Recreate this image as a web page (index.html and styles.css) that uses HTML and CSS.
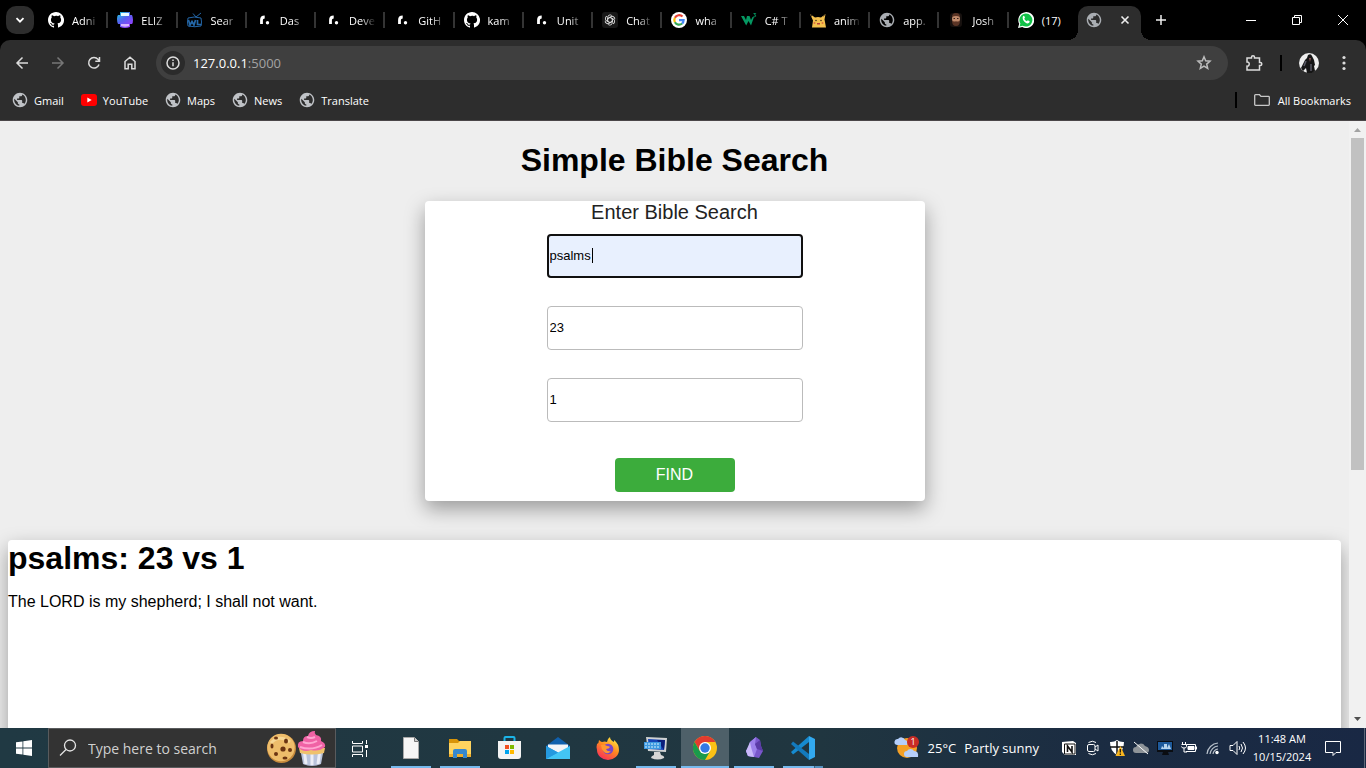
FILE: index.html
```html
<!DOCTYPE html>
<html lang="en">
<head>
<meta charset="utf-8">
<title>Simple Bible Search</title>
<link rel="stylesheet" href="styles.css">
</head>
<body>
<svg class="sprite" aria-hidden="true">
  <symbol id="globe" viewBox="1 1 22 22"><path fill="currentColor" d="M12 2C6.480 2 2 6.480 2 12s4.480 10 10 10 10-4.480 10-10S17.520 2 12 2zm-1 17.930c-3.950-.49-7-3.850-7-7.930 0-.62.08-1.210.21-1.790L9 15v1c0 1.100.9 2 2 2v1.930zm6.900-2.540c-.26-.81-1-1.390-1.900-1.390h-1v-3c0-.55-.45-1-1-1H8v-2h2c.55 0 1-.45 1-1V7h2c1.100 0 2-.9 2-2v-.41c2.930 1.190 5 4.060 5 7.410 0 2.080-.8 3.970-2.100 5.390z"/></symbol>
  <symbol id="github" viewBox="0 0 16 16"><path fill="#fff" d="M8 0C3.580 0 0 3.580 0 8c0 3.540 2.290 6.530 5.470 7.590.4.070.55-.17.55-.38v-1.490c-2.010.37-2.530-.49-2.690-.94-.09-.23-.48-.94-.82-1.130-.28-.15-.68-.52-.01-.53.63-.01 1.080.58 1.230.82.72 1.210 1.870.87 2.330.66.07-.52.28-.87.51-1.070-1.780-.2-3.640-.89-3.640-3.950 0-.87.31-1.590.82-2.150-.08-.2-.36-1.020.08-2.120 0 0 .67-.21 2.200.82A7.600 7.600 0 0 1 8 3.870c.68 0 1.360.09 2 .27 1.530-1.040 2.200-.82 2.200-.82.44 1.100.16 1.920.08 2.120.51.56.82 1.270.82 2.150 0 3.070-1.870 3.750-3.650 3.950.29.25.54.73.54 1.480v2.200c0 .21.15.46.55.38A8 8 0 0 0 8 0z"/></symbol>
  <symbol id="rdot" viewBox="0 0 16 16"><path d="M5.500 12V8Q5.500 5 8.700 5" fill="none" stroke="#fff" stroke-width="2.800"/><circle cx="11.500" cy="10.700" r="1.700" fill="#fff"/></symbol>
</svg>

<header class="browser">
  <div class="tabstrip">
    <button class="tab-search" aria-label="Search tabs"><svg viewBox="0 0 10 10" width="10" height="10"><path d="M1.500 3.200 5 6.700l3.500-3.500" fill="none" stroke="#fff" stroke-width="1.800"/></svg></button>
    <nav class="tabs" aria-label="Open tabs">
      <a class="tab" href="#"><svg class="fav"><use href="#github"/></svg><span>Adni</span></a>
      <a class="tab" href="#"><svg class="fav" viewBox="0 0 16 16"><defs><linearGradient id="el" x2=".7" y2="1"><stop stop-color="#18d4dc"/><stop offset=".5" stop-color="#5660f0"/><stop offset="1" stop-color="#9a3cff"/></linearGradient></defs><path d="M3 0h10v3h2q1 2 1 5t-1 4h-2v3q-5 2-10 0v-3H1Q0 10 0 7t1-4h2z" fill="url(#el)"/><path d="M4 1h8v3H4z" fill="#e8fbff"/><path d="M4 12h8v2q-4 1.500-8 0z" fill="#d8b5ff"/></svg><span>ELIZ</span></a>
      <a class="tab" href="#"><svg class="fav" viewBox="0 0 16 16" fill="none" stroke="#2467a8"><path d="m9 5 5-4M9 5 6 1.500"/><path d="M1 6q6-2 13 0 1 4 0 8-6 1.500-13 0-1-4 0-8z"/><path d="m1.500 8 1.500 5 2-3.500L7 13l1.500-5m2 0v4.500h4" stroke-width="1.700"/></svg><span>Sear</span></a>
      <a class="tab" href="#"><svg class="fav"><use href="#rdot"/></svg><span>Das</span></a>
      <a class="tab" href="#"><svg class="fav"><use href="#rdot"/></svg><span>Deve</span></a>
      <a class="tab" href="#"><svg class="fav"><use href="#rdot"/></svg><span>GitH</span></a>
      <a class="tab" href="#"><svg class="fav"><use href="#github"/></svg><span>kam</span></a>
      <a class="tab" href="#"><svg class="fav"><use href="#rdot"/></svg><span>Unit</span></a>
      <a class="tab" href="#"><svg class="fav" viewBox="0 0 16 16"><rect width="16" height="16" rx="3" fill="#181818"/><g fill="none" stroke="#ddd" stroke-width=".9"><g id="petal"><path d="M8 5.400 10.400 6.800v3.700a2.600 2.600 0 0 1-4.200 2"/></g><use href="#petal" transform="rotate(60 8 8)"/><use href="#petal" transform="rotate(120 8 8)"/><use href="#petal" transform="rotate(180 8 8)"/><use href="#petal" transform="rotate(240 8 8)"/><use href="#petal" transform="rotate(300 8 8)"/></g></svg><span>Chat</span></a>
      <a class="tab" href="#"><svg class="fav" viewBox="0 0 16 16"><circle cx="8" cy="8" r="8" fill="#fff"/><g fill="none" stroke-width="2.200"><path d="M11.500 4.600A4.700 4.700 0 0 0 3.900 5.800" stroke="#ea4335"/><path d="M3.900 5.800a4.700 4.700 0 0 0 0 4.500" stroke="#fbbc05"/><path d="M3.900 10.300a4.700 4.700 0 0 0 7.200 1.200" stroke="#34a853"/><path d="M11.100 11.500A4.500 4.500 0 0 0 12.600 8.200H8" stroke="#4285f4"/></g></svg><span>wha</span></a>
      <a class="tab" href="#"><svg class="fav" viewBox="0 0 16 16"><path d="M0 4h3l2 4 1-4h2.500l1.500 4 1.500-3h1.500L10 13.500 7.500 9l-2.300 4.500z" fill="#059862"/><path d="M12.500 1.500h2.200L13.500 3q1.500 0 1.200 1.200-.7 1-2.200.3" fill="none" stroke="#059862" stroke-width=".9"/></svg><span>C# T</span></a>
      <a class="tab" href="#"><svg class="fav" viewBox="0 0 16 16"><path d="m0 2 5 3.500q3-1 6 0L15.500 2l-1 5.500 1.500 8H2l1-7z" fill="#f4c14e"/><path d="m0 2 2 1v2zM15.500 2l-2 1v2z" fill="#352717"/><circle cx="6" cy="8.500" r=".8" fill="#43301b"/><circle cx="11" cy="8.500" r=".8" fill="#43301b"/><path d="M7 11h3v1.500H7z" fill="#b5403a"/><circle cx="4.500" cy="11" r="1" fill="#df7340"/><circle cx="12.500" cy="11" r="1" fill="#df7340"/></svg><span>anim</span></a>
      <a class="tab" href="#"><svg class="fav"><use href="#globe"/></svg><span>app.</span></a>
      <a class="tab" href="#"><svg class="fav" viewBox="0 0 16 16"><rect x="2" y="1" width="12" height="14" rx="3" fill="#17110f"/><ellipse cx="8" cy="7" rx="4" ry="5" fill="#c18b6c"/><path d="M4 5q0-4 4-4t4 4Q8 3 4 5M4 8.500q1 1.500 4 .8 3 .7 4-.8 0 5.500-4 5.500T4 8.500" fill="#5a3425"/><path d="M5.500 6.500h1.500m2 0h1.500" stroke="#35201a"/></svg><span>Josh</span></a>
      <a class="tab" href="#"><svg class="fav" viewBox="0 0 16 16"><path d="M0 16l1.200-4.200A8 8 0 1 1 4.300 15z" fill="#fff"/><path d="m1.600 14.400.8-2.800a6.500 6.500 0 1 1 2.200 2.100z" fill="#12c148"/><path d="M5 4.200q1-.8 1.500.3l.5 1.300-.8 1q.8 1.800 2.600 2.500l1-1.100 1.900 1q0 2-2 2.200C6.500 11 3.700 7 5 4.200" fill="#fff"/></svg><span>(17)</span></a>
    </nav>
    <div class="active-tab"><svg class="fav"><use href="#globe"/></svg><button aria-label="Close tab"><svg viewBox="0 0 10 10" width="10" height="10"><path d="m1.500 1.500 7 7m0-7-7 7" stroke="#eee" stroke-width="1.600"/></svg></button></div>
    <div class="window-area">
      <button aria-label="New tab"><svg viewBox="0 0 12 12" width="12" height="12"><path d="M6 1v10M1 6h10" stroke="#eee" stroke-width="1.500"/></svg></button>
      <div class="window-controls">
        <button aria-label="Minimize"><svg width="12" height="12"><path d="M1 6.500h10" stroke="#fff"/></svg></button>
        <button aria-label="Restore"><svg width="12" height="12" fill="none" stroke="#fff"><path d="M1.500 3.500h7v7h-7zM3.500 3.500v-2h7v7h-2"/></svg></button>
        <button aria-label="Close"><svg width="12" height="12"><path d="m1 1 10 10m0-10L1 11" stroke="#fff"/></svg></button>
      </div>
    </div>
  </div>

  <div class="toolbar">
    <div class="nav-buttons">
      <button aria-label="Back"><svg viewBox="0 0 16 16"><path d="M14 8H3m5.500-5.500L3 8l5.500 5.500"/></svg></button>
      <button class="dim" aria-label="Forward"><svg viewBox="0 0 16 16"><path d="M2 8h11M7.500 2.500 13 8l-5.500 5.500"/></svg></button>
      <button aria-label="Reload"><svg viewBox="0 0 16 16"><path d="M13 9.500A5.300 5.300 0 1 1 12 4.300l1.500 1.700M13.500 2v4.200H9.300"/></svg></button>
      <button aria-label="Home"><svg viewBox="0 0 16 16"><path d="M3 6.500 8 2.300l5 4.200v7.200H9.800V9.300H6.200v4.400H3z"/></svg></button>
    </div>
    <div class="omnibox">
      <button class="site-info" aria-label="Site information"><svg viewBox="0 0 16 16"><circle cx="8" cy="8" r="6"/><path d="M8 7.300v4M8 4.500v1.500"/></svg></button>
      <div class="address"><span>127.0.0.1</span>:5000</div>
      <button class="star" aria-label="Bookmark this page"><svg viewBox="0 0 16 16"><path d="m8 1.800 1.700 4 4.300.4-3.300 2.900 1 4.300L8 11.100l-3.700 2.300 1-4.300L2 6.200l4.300-.4z"/></svg></button>
    </div>
    <div class="toolbar-end">
      <button aria-label="Extensions"><svg class="ext" viewBox="0 0 18 18"><path d="M2 4h4.500V3.200a1.500 1.500 0 0 1 3 0V4h5v4.500h.8a1.500 1.500 0 0 1 0 3h-.8V16H2v-3.800c3 .3 3-4.500 0-4.200z"/></svg></button>
      <i class="divider"></i>
      <button aria-label="Profile"><svg class="avatar" viewBox="0 0 20 20"><circle cx="10" cy="10" r="10" fill="#eee"/><path d="M9 2q3-2 4 1l2 4 1 5-1 1 1 5-3 2H8l-1-5-3 3-2-3 4-8 2-2z" fill="#151515"/><path d="m10 5 2 0-1 4z" fill="#8b5557"/><path d="m5 13 2-5m5 3 0 7" stroke="#5a5a66" fill="none"/></svg></button>
      <button aria-label="Menu"><svg class="dots" viewBox="0 0 16 16"><circle cx="8" cy="2.500" r="1.600"/><circle cx="8" cy="8" r="1.600"/><circle cx="8" cy="13.500" r="1.600"/></svg></button>
    </div>
  </div>

  <nav class="bookmarks" aria-label="Bookmarks">
    <a href="#"><svg class="mark"><use href="#globe"/></svg>Gmail</a>
    <a href="#"><svg class="yt" viewBox="0 0 16 12"><rect width="16" height="12" rx="3" fill="#f00"/><path d="m6.300 3.500 4.400 2.500-4.400 2.500z" fill="#fff"/></svg>YouTube</a>
    <a href="#"><svg class="mark"><use href="#globe"/></svg>Maps</a>
    <a href="#"><svg class="mark"><use href="#globe"/></svg>News</a>
    <a href="#"><svg class="mark"><use href="#globe"/></svg>Translate</a>
    <i class="divider push"></i>
    <a class="all" href="#"><svg class="folder" viewBox="0 0 16 12"><path d="M.7 1.500q0-.8.8-.8h4l1.500 1.700h7.500q.8 0 .8.800v7.300q0 .8-.8.8h-13q-.8 0-.8-.8z" fill="none" stroke="#c7c7c7" stroke-width="1.300"/></svg>All Bookmarks</a>
  </nav>
</header>

<div class="viewport">
  <main class="page">
    <h1>Simple Bible Search</h1>
    <form class="card">
      <label class="form-title" for="book">Enter Bible Search</label>
      <div class="field"><input class="focused" id="book" type="text" value="psalms"><i class="caret"></i></div>
      <div class="field"><input aria-label="Chapter" type="text" value="23"></div>
      <div class="field"><input aria-label="Verse" type="text" value="1"></div>
      <button class="find" type="button">FIND</button>
    </form>
    <section class="results">
      <h1>psalms: 23 vs 1</h1>
      <p>The LORD is my shepherd; I shall not want.</p>
    </section>
  </main>
  <div class="scrollbar" aria-hidden="true">
    <svg viewBox="0 0 17 17"><path d="m5 11 3.500-4 3.500 4z" fill="#a3a3a3"/></svg>
    <div class="track"><div class="thumb"></div></div>
    <svg viewBox="0 0 17 17"><path d="m5 6 3.500 4L12 6z" fill="#505050"/></svg>
  </div>
</div>

<footer class="taskbar">
  <button class="start" aria-label="Start"><svg viewBox="0 0 16 16" width="16" height="16" fill="#fff"><path d="M0 2.300 6.500 1.400v6.200H0zM7.300 1.300 16 0v7.600H7.300zM0 8.400h6.500v6.200L0 13.700zM7.300 8.400H16V16l-8.700-1.300z"/></svg></button>
  <div class="search">
    <svg width="18" height="18" viewBox="0 0 18 18" fill="none" stroke="#e5e5e5" stroke-width="1.300"><circle cx="11" cy="6.500" r="5.500"/><path d="M7 10.500 1 16.500"/></svg>
    <input type="text" placeholder="Type here to search" aria-label="Type here to search">
    <svg class="treats" viewBox="0 0 60 36">
      <circle cx="15.500" cy="18.500" r="14.500" fill="#c68a3c"/><circle cx="15" cy="17.500" r="13.700" fill="#eebd6b"/><path d="M5 13q8-9 19-1" fill="none" stroke="#f7d795" stroke-width="3"/>
      <g fill="#6b3412"><ellipse cx="10" cy="8" rx="2" ry="1.500"/><ellipse cx="20" cy="11" rx="2" ry="2.500"/><circle cx="17" cy="19" r="2.600"/><ellipse cx="6" cy="16" rx="1.500" ry="2.500"/><circle cx="10" cy="24" r="2"/><circle cx="24" cy="20" r="2"/><ellipse cx="19" cy="28" rx="2.500" ry="1.500"/></g>
      <path d="m34 18 3 16q9 4 18 0l3-16z" fill="#b9c3db"/><path d="m38 19 2 15m6-15v16m8-16-2 15" stroke="#eceef6" stroke-width="3"/><path d="M33 18h26l-1 5q-12 3-24 0z" fill="#efc26c"/>
      <path d="M32 17q-1-6 5-6 0-5 5-5 1-5 7-5-1 2 1 4 6 1 5 6 5 2 4 6-6 5-14 3-8 3-13-3z" fill="#f062a5"/><path d="M37 12q7 3 14-1M41 7q4 2 8 0M34 17q12 4 22-2" stroke="#ffa6d1" stroke-width="2" fill="none"/>
    </svg>
  </div>
  <nav class="apps" aria-label="Taskbar apps">
    <button class="app" aria-label="Task View"><svg width="16" height="18" viewBox="0 0 16 18" fill="none" stroke="#fff"><path d="M.5 2v2.500h10V2M.5 7h10v6H.5zM.5 18v-2.500h10V18M14.500 1v4m0 6v7"/><path d="M13 6h3v3h-3z" fill="#fff" stroke="none"/></svg></button>
    <button class="app running" aria-label="Document"><svg width="16" height="22" viewBox="0 0 16 22"><path d="M.5.5h11l4 4v17H.5z" fill="#f6f6f6" stroke="#a9a9a9"/><path d="M11.500.5v4h4" fill="#ccc" stroke="#777"/></svg></button>
    <button class="app running" aria-label="File Explorer"><svg width="22" height="19" viewBox="0 0 22 19"><path d="M0 0h8l2 2h12v5H0z" fill="#d89408"/><path d="M0 4h9l2-2h11v16H0z" fill="#ffd45f"/><path d="M0 15h22v3H0z" fill="#efae2c"/><path d="M4 19v-7q0-2 2-2h10q2 0 2 2v7h-4v-4H8v4z" fill="#3688cf"/></svg></button>
    <button class="app" aria-label="Microsoft Store"><svg width="23" height="24" viewBox="0 0 23 24"><path d="M6.500 5V2q0-1 1-1h8q1 0 1 1v3" fill="none" stroke="#1bb4e8" stroke-width="2"/><path d="M0 5h23v15q0 3-3 3H3q-3 0-3-3z" fill="#f4f4f4"/><path d="M7 9h4v4H7z" fill="#f25022"/><path d="M12 9h4v4h-4z" fill="#7fba00"/><path d="M7 14h4v4H7z" fill="#00a4ef"/><path d="M12 14h4v4h-4z" fill="#ffb900"/></svg></button>
    <button class="app" aria-label="Mail"><svg width="24" height="22" viewBox="0 0 24 22"><path d="m0 9 12-9 12 9v4H0z" fill="#1060ad"/><path d="M2 7.500h20v5l-10 4-10-4z" fill="#f3f4f7"/><path d="m0 9 24 13H0z" fill="#1c9be8"/><path d="M24 9v13H0z" fill="#43c5f5"/><path d="m0 9 12 6.500L0 22z" fill="#2599df"/></svg></button>
    <button class="app" aria-label="Firefox"><svg width="23" height="23" viewBox="0 0 23 23"><defs><linearGradient id="ff" x1=".8" x2=".2" y2="1"><stop stop-color="#fff044"/><stop offset=".45" stop-color="#ff8b20"/><stop offset="1" stop-color="#f82760"/></linearGradient></defs><path d="M1 7q2-1 2-4 2 2 3 2 3-1 5 0Q11 2 14 0q0 3 4 5 0-1 0-2 5 4 5 10a11 10 0 0 1-22 0q-1-3 0-6z" fill="url(#ff)"/><circle cx="12" cy="12" r="5.300" fill="#7846c8"/><path d="M5 8q3-1 6 1 2 0 3 1-1 2-4 2 1 3 5 2-3 4-7 1-3-3-3-7z" fill="#ff9830"/></svg></button>
    <button class="app running" aria-label="Remote desktop"><svg width="24" height="24" viewBox="0 0 24 24"><path d="m2 1 21 1-1 14-18-1z" fill="#cfd2d3"/><path d="m4 3 17 1-1 10-15-1z" fill="#1545b7"/><path d="m13 4 8 0-1 10z" fill="#0a1e7b"/><path d="M0 6h17v7H0z" fill="#3c98e0"/><path d="M1 8h15M1 11h15" stroke="#d6f2ff" stroke-dasharray="2 1"/><path d="M10 16h6l1 3q4 1 3 3-6 3-13 0 0-2 3-3z" fill="#d6d6d6"/></svg></button>
    <button class="app running current" aria-label="Chrome"><svg width="24" height="24" viewBox="0 0 24 24"><circle cx="12" cy="12" r="12" fill="#fbc116"/><path d="M1.600 6A12 12 0 0 1 22.400 6H12l-5.200 9z" fill="#e33b2e"/><path d="M1.600 6A12 12 0 0 0 12 24l5.200-9-5.200 3-5.200-3z" fill="#1a9a4b"/><circle cx="12" cy="12" r="6" fill="#fff"/><circle cx="12" cy="12" r="4.700" fill="#3379e4"/></svg></button>
    <button class="app running" aria-label="Obsidian"><svg width="17" height="22" viewBox="0 0 17 22"><path d="m4 5 6-5 4 3 1 6 2 5-4 7-5-1-6-1-2-5 3-4z" fill="#7957cb"/><path d="m4 5 6-5-1 7 2 5-3 8-6-1-2-5 3-4z" fill="#9c80ea"/><path d="m9 7 5-4 1 6 2 5-6-2z" fill="#5b3ba6"/><path d="m4 5 1 5 3 10-6-1-2-5z" fill="#c9b9fa"/></svg></button>
    <button class="app running grouped" aria-label="Visual Studio Code"><svg width="24" height="24" viewBox="0 0 24 24"><path d="M18 0 0 16l2 2.500L18 6z" fill="#168bd0"/><path d="M0 8 2 5.500 18 18v6z" fill="#137abd"/><path d="m18 0 6 3v18l-6 3z" fill="#32a9ef"/></svg></button>
  </nav>
  <div class="weather">
    <svg width="26" height="24" viewBox="0 0 26 24"><circle cx="13" cy="12" r="10" fill="#f3a026"/><path d="M3 9a3 3 0 1 1 1-6 4 4 0 0 1 7 1q4 1 2 5zM13 21a3 3 0 0 1 0-6 4 4 0 0 1 7 0q5 0 4 6z" fill="#b5cffb"/><circle cx="19" cy="6" r="6" fill="#c82c25"/><text x="19" y="9" class="badge">1</text></svg>
    <span>25°C</span><span>Partly sunny</span>
  </div>
  <div class="tray">
    <svg viewBox="0 0 16 16"><path d="M1 2 12 1l3 2v12H4l-3-3z" fill="#fff"/><path d="M3.500 4H14v10H3.500z" fill="#fff" stroke="#111"/><path d="M6.500 12V6l4.500 6V6" fill="none" stroke="#111" stroke-width="1.600"/></svg>
    <svg viewBox="0 0 16 16" fill="none" stroke="#fff"><path d="M3.500 2.500Q7.500 0 11 2.500M3.500 13.500q4 2.500 7.500 0"/><rect x="2.500" y="4.500" width="7.500" height="7" rx="1.500"/><path d="m10 7 3-2v6l-3-2"/></svg>
    <svg viewBox="0 0 16 16"><path d="M8 0q3 2.300 7 2 0 9-7 13Q1 11 1 2q4 .3 7-2z" fill="#fff"/><path d="M8 1v13M1 7h14" stroke="#111" stroke-width="1.500"/><path d="m11.500 6 4.500 10H6.500z" fill="#f8b51e"/><path d="M11.300 9v3.500m0 1v1.500" stroke="#111" stroke-width="1.200"/></svg>
    <svg viewBox="0 0 16 16"><path d="M3 13a3 3 0 0 1 0-6 5 5 0 0 1 9-1q4 1 4 4t-3 3z" fill="#8e9499"/><path d="m1 2 14 12" stroke="#fff"/></svg>
    <svg viewBox="0 0 16 16"><path d="M0 1h16v11h-5l1 3H5l1-3H0z" fill="#0a0d12"/><path d="M1 2h14v8H1z" fill="#1e5a9b"/><path d="M1 9h3l1-3 2 2V4l3 0v4l2-4 2 5" fill="#b7d5ee"/></svg>
    <svg viewBox="0 0 16 16" fill="none" stroke="#fff"><path d="M5.500 4.500h9v7H5M15.500 6.500v3M1.500 2v2m3-2v2M.5 4.500h5v2q0 1.500-2.500 1.500T.5 6.500M3 8v4h3"/><path d="M7 6.500h6v3H7z" fill="#fff"/></svg>
    <svg viewBox="0 0 16 16" fill="none" stroke="#b8c1cb" stroke-width="1.200"><path d="M2 14A12 12 0 0 1 13 3M5 14a9 9 0 0 1 8-8M8 14a6 6 0 0 1 5-5"/><circle cx="12" cy="12.500" r="1.700" fill="#fff" stroke="none"/></svg>
    <svg class="volume" viewBox="0 0 18 16" fill="none" stroke="#fff"><path d="M1 5.500h3l4-4v13l-4-4H1zM10 6q1.500 2 0 4M12 4q3 4 0 8M14 2q5 6 0 12"/></svg>
  </div>
  <div class="clock"><span>11:48 AM</span><span>10/15/2024</span></div>
  <button class="notify" aria-label="Notifications"><svg width="16" height="16" viewBox="0 0 16 16" fill="none" stroke="#fff"><path d="M.5 1.500h15v11H11L8 15.500v-3H.5z"/></svg></button>
  <i class="show-desktop"></i>
</footer>
</body>
</html>
```

FILE: styles.css
```css
* { box-sizing: border-box; }
body {
  margin: 0;
  height: 100vh;
  display: flex;
  flex-direction: column;
  overflow: hidden;
  font-family: "Open Sans", "Noto Sans", sans-serif;
  font-size: 11px;
  color: #fff;
}
button {
  border: 0;
  padding: 0;
  background: none;
  color: inherit;
  font: inherit;
  display: flex;
  align-items: center;
  justify-content: center;
}
a { color: inherit; text-decoration: none; }
svg { flex: none; }
.sprite { position: absolute; width: 0; height: 0; }

/* Browser chrome */
.browser { flex: none; background: #000; }
.tabstrip { display: flex; height: 40px; }
.tab-search {
  width: 28px;
  height: 28px;
  margin: 6px 5px 0 6px;
  border-radius: 10px;
  background: #2d2d2d;
}
.tabs { flex: 1; display: flex; min-width: 0; }
.tab {
  flex: 1;
  min-width: 0;
  display: flex;
  align-items: center;
  gap: 8px;
  padding: 0 9px;
  background: linear-gradient(#343434, #343434) right 12px / 2px 16px no-repeat;
}
.tab:last-child { background: none; }
.tab span {
  flex: 1;
  white-space: nowrap;
  -webkit-mask-image: linear-gradient(90deg, #000 45%, transparent);
  mask-image: linear-gradient(90deg, #000 45%, transparent);
}
.tab:last-child span { -webkit-mask-image: none; mask-image: none; }
.fav { width: 16px; height: 16px; color: #a9adb2; }
.active-tab {
  position: relative;
  width: 63px;
  margin-top: 6px;
  padding: 0 11px 6px 8px;
  display: flex;
  align-items: center;
  justify-content: space-between;
  border-radius: 10px 10px 0 0;
  background: #2d2d2d;
}
.active-tab::before,
.active-tab::after {
  content: "";
  position: absolute;
  bottom: 0;
  width: 10px;
  height: 10px;
}
.active-tab::before { right: 100%; background: radial-gradient(circle at 0 0, transparent 10px, #2d2d2d 10px); }
.active-tab::after { left: 100%; background: radial-gradient(circle at 100% 0, transparent 10px, #2d2d2d 10px); }
.window-area {
  width: 225px;
  padding-left: 14px;
  display: flex;
  justify-content: space-between;
}
.window-controls { display: flex; }
.window-controls button { width: 46px; }

.toolbar {
  display: flex;
  height: 46px;
  background: #2d2d2d;
  border-radius: 10px 10px 0 0;
}
.nav-buttons { display: flex; align-items: center; padding: 0 8px 0 4px; }
.nav-buttons button { width: 36px; height: 36px; }
.toolbar svg {
  width: 16px;
  height: 16px;
  fill: none;
  stroke: #dcdcdc;
  stroke-width: 1.5;
}
.toolbar .dim svg { stroke: #777; }
.omnibox {
  flex: 1;
  display: flex;
  align-items: center;
  height: 34px;
  margin-top: 6px;
  padding: 0 16px 0 5px;
  border-radius: 17px;
  background: #3f3f3f;
}
.site-info { width: 24px; height: 24px; border-radius: 50%; background: #2b2b2b; }
.address { flex: 1; padding-left: 8px; font-size: 13px; color: #a3a3a3; }
.address span { color: #fff; }
.toolbar .star svg { stroke: #bdbdbd; }
.toolbar-end { display: flex; align-items: center; gap: 17px; padding: 0 14px 0 17px; }
.toolbar .ext { width: 18px; height: 18px; }
.toolbar .avatar { width: 20px; height: 20px; stroke: none; }
.toolbar .dots { fill: #dcdcdc; stroke: none; }
.divider { width: 2px; height: 16px; background: #000; }

.bookmarks {
  display: flex;
  align-items: center;
  gap: 17px;
  height: 35px;
  padding: 0 15px 6px 12px;
  background: #2d2d2d;
  border-bottom: 1px solid #4a4648;
}
.bookmarks a { display: flex; align-items: center; gap: 6px; }
.mark { width: 16px; height: 16px; color: #bfc2c6; }
.yt { width: 16px; height: 12px; }
.folder { width: 16px; height: 12px; }
.push { margin-left: auto; }
.bookmarks .all { gap: 8px; }

/* Page */
.viewport {
  flex: 1;
  min-height: 0;
  display: flex;
  background: #eee;
  color: #000;
  font-family: "Liberation Sans", Arial, sans-serif;
  font-size: 16px;
}
.page {
  flex: 1;
  display: flex;
  flex-direction: column;
  align-items: center;
  padding: 21px 8px 0;
  overflow: hidden;
}
h1 { margin: 0; font-size: 32px; line-height: 37px; }
.card,
.results {
  background: #fff;
  border-radius: 4px;
  box-shadow: 0 8px 20px rgba(0, 0, 0, .35);
}
.card {
  width: 500px;
  max-width: 100%;
  margin: 22px 0 39px;
  padding-bottom: 9px;
  display: flex;
  flex-direction: column;
  align-items: center;
}
.form-title { margin-bottom: 10px; font-size: 20px; line-height: 23px; color: #222; }
.field { position: relative; width: 256px; margin-bottom: 28px; }
.field input {
  display: block;
  width: 100%;
  height: 44px;
  padding: 0 1px 2px 2px;
  border: 1px solid #bbb;
  border-radius: 4px;
  background: #fff;
  color: #000;
  font: 13px "Liberation Sans", Arial, sans-serif;
}
.field .focused { padding-left: 1px; border: 2px solid #101010; background: #e8f0fe; }
.caret { position: absolute; left: 45px; top: 14px; width: 1px; height: 15px; background: #000; }
.find {
  width: 120px;
  height: 34px;
  margin-top: 8px;
  border-radius: 4px;
  background: #3cac3c;
  color: #fff;
  font-size: 16px;
}
.results { width: 100%; flex: 1 0 240px; }
.results p { margin: 16px 0; line-height: 18px; }
.scrollbar { width: 17px; display: flex; flex-direction: column; background: #f1f1f1; }
.scrollbar svg { width: 17px; height: 17px; }
.track { flex: 1; padding: 0 2px; }
.thumb { height: 58%; background: #c1c1c1; }

/* Taskbar */
.taskbar {
  flex: none;
  display: flex;
  height: 40px;
  background: linear-gradient(90deg, #203943, #203640 60%, #1b2c42 80%, #192844);
}
.start { width: 48px; }
.search {
  width: 288px;
  display: flex;
  align-items: center;
  gap: 11px;
  padding: 0 9px 0 10px;
  border: 1px solid #595b5d;
  background: #333;
}
.search input {
  flex: 1;
  min-width: 0;
  padding: 0;
  border: 0;
  background: none;
  color: #fff;
  font: 14px "Open Sans", "Noto Sans", sans-serif;
}
.search input::placeholder { color: #d0d0d0; opacity: 1; }
.treats { width: 60px; height: 36px; }
.apps { display: flex; gap: 1px; }
.app { position: relative; width: 48px; }
.app:first-child { margin-right: 2px; }
.running::after {
  content: "";
  position: absolute;
  left: 4px;
  right: 4px;
  bottom: 0;
  height: 2px;
  background: #76b9ed;
}
.current { background: #4e6069; }
.current::after { left: 0; right: 0; }
.grouped::after { background: linear-gradient(90deg, #76b9ed 31px, #3d6380 31px, #3d6380 32px, #5490bd 32px); }
.weather {
  margin-left: auto;
  display: flex;
  align-items: center;
  gap: 8px;
  padding-right: 22px;
  font-size: 13px;
}
.badge { fill: #fff; font-size: 9px; text-anchor: middle; }
.tray { display: flex; align-items: center; gap: 8px; }
.tray svg { width: 16px; height: 16px; }
.tray .volume { width: 18px; }
.clock {
  width: 70px;
  display: flex;
  flex-direction: column;
  align-items: center;
  justify-content: center;
  line-height: 18px;
}
.notify { width: 32px; }
.show-desktop { width: 1px; margin: 0 1px 0 15px; background: #5d6878; }
```
